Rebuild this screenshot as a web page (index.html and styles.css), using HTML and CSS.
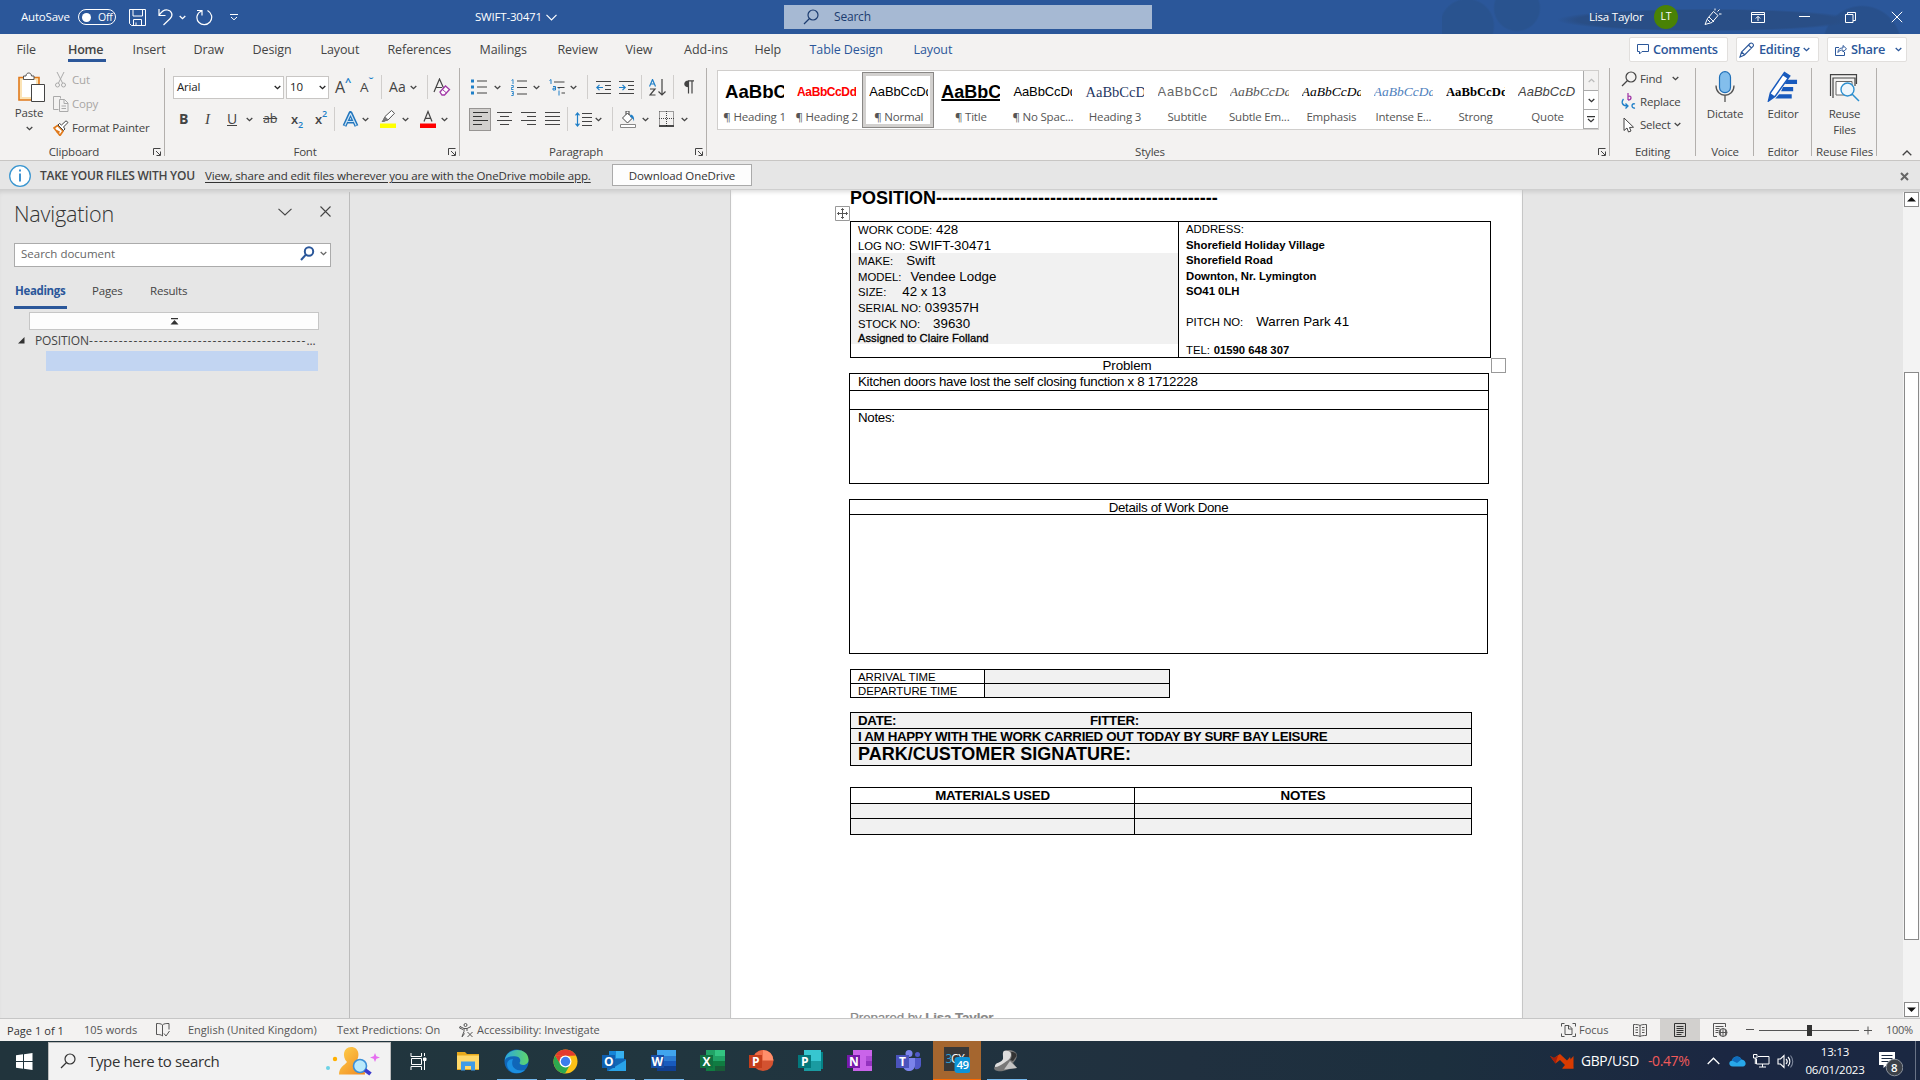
FILE: index.html
```html
<!DOCTYPE html>
<html lang="en">
<head>
<meta charset="utf-8">
<title>SWIFT-30471 - Word</title>
<link rel="stylesheet" href="styles.css">
</head>
<body>
<svg class="defs" width="0" height="0">
  <symbol id="chev" viewBox="0 0 7 5"><path d="M.7 1 3.5 3.7 6.300 1" fill="none" stroke="currentColor" stroke-width="1.300"/></symbol>
  <symbol id="launch" viewBox="0 0 8 8"><path d="M.5 7V.5H7.500M3 3l4 4M7.500 3.500v4h-4" fill="none" stroke="#444" stroke-width="1"/></symbol>
  <symbol id="lens" viewBox="0 0 16 16"><circle cx="10" cy="6" r="5" fill="none" stroke="currentColor" stroke-width="1.200"/><path d="M6.500 9.500 1 15" stroke="currentColor" stroke-width="1.300"/></symbol>
</svg>

<header class="titlebar">
  <span class="autosave">AutoSave</span>
  <span class="toggle"><i></i>Off</span>
  <svg width="17" height="17" viewBox="0 0 17 17" fill="none" stroke="#fff"><path d="M.5.5h16v16h-14l-2-2zM4 .5v6.500h9.500V.500M4.500 16.500v-6h8v6M7 13.500v3"/></svg>
  <svg width="16" height="18" viewBox="0 0 16 18" fill="none" stroke="#fff" stroke-width="1.200"><path d="M1 1v6.500h6.500M1.300 7C4 3 7 1.500 9.500 2c4.500.8 6 5.500 2.500 8.800L5.500 17"/></svg>
  <svg class="c w" width="7" height="5"><use href="#chev"/></svg>
  <svg width="17" height="17" viewBox="0 0 17 17" fill="none" stroke="#fff" stroke-width="1.200"><path d="M1 1.500h5v5M5.500 2C.5 4-.5 10 3 13.500c3 3 8 2.800 11-.5 3-4 2-9-2.500-11.500"/></svg>
  <svg width="8" height="7" viewBox="0 0 8 7" fill="none" stroke="#fff"><path d="M0 .5h8M1 3l3 2.800L7 3"/></svg>
  <span>SWIFT-30471</span>
  <svg class="w" width="11" height="7" viewBox="0 0 11 7" fill="none" stroke="#fff" stroke-width="1.200"><path d="m.5.8 5 5 5-5"/></svg>
  <div class="tsearch"><svg width="16" height="16"><use href="#lens"/></svg><span>Search</span></div>
  <div class="art"></div>
  <span class="user">Lisa Taylor</span>
  <span class="avatar">LT</span>
  <svg width="18" height="18" viewBox="0 0 18 18" fill="none" stroke="#fff"><path d="m1 16.500 2.500-6 6-7 4.500 4-6 7zM5 9l5 5M3.500 11.500 6 14M11 2.500V.5M13.500 3.500l2-2M15 6h2.500"/></svg>
  <svg width="14" height="11" viewBox="0 0 14 11" fill="none" stroke="#fff"><path d="M.5.5h13v10H.5zM.5 2.500h13M7 9V4.500M4.800 6.500 7 4.300l2.200 2.200"/></svg>
  <svg width="11" height="11" viewBox="0 0 11 11" stroke="#fff"><path d="M0 4.500h11"/></svg>
  <svg width="11" height="11" viewBox="0 0 11 11" fill="none" stroke="#fff"><path d="M.5 2.500h7.500v8H.500zM2.500 2.500V.500h8v8H8"/></svg>
  <svg width="12" height="12" viewBox="0 0 12 12" stroke="#fff"><path d="m.8.8 10.400 10.400M11.200.8.8 11.200"/></svg>
</header>

<nav class="tabs">
  <span>File</span><span class="on">Home</span><span>Insert</span><span>Draw</span><span>Design</span><span>Layout</span><span>References</span><span>Mailings</span><span>Review</span><span>View</span><span class="addins">Add-ins</span><span>Help</span><span class="ctx">Table Design</span><span class="ctx">Layout</span>
  <div class="tbtn b1"><svg width="12" height="11" viewBox="0 0 12 11" fill="none" stroke="#2b579a"><path d="M.5.5h11v7H5l-2.500 2.500V7.500h-2z"/></svg>Comments</div>
  <div class="tbtn b2"><svg width="16" height="16" viewBox="0 0 16 16" fill="none" stroke="#2b579a" stroke-width="1.100"><path d="m1 15 1.500-5L11 1.500c1.500-1.500 4.500 1 3 3L5.500 13zM9.500 3l3 3M2.500 10 6 13"/></svg>Editing<svg class="c" width="7" height="5"><use href="#chev"/></svg></div>
  <div class="tbtn b3"><svg width="12" height="12" viewBox="0 0 12 12" fill="none" stroke="#2b579a"><path d="M4 3.500H.5v8h9V8M3 8.500C3 5 5 4 8 4V1.500l3.500 3.300L8 8V6C6 6 4 6.500 3 8.500z"/></svg>Share<svg class="c" width="7" height="5"><use href="#chev"/></svg></div>
</nav>

<section class="ribbon">
  <div class="group clip">
    <div class="clipbody">
      <div class="paste">
        <svg width="28" height="31" viewBox="0 0 28 31" fill="none"><path d="M1 5.500h20V28H1z" fill="#fbe3b5" stroke="#e07a1c" stroke-width="1.600"/><path d="M4 8h14v17H4z" fill="#fff"/><path d="M5.500 7.500V4H8c0-4 5.500-4 5.500 0H16v3.500z" fill="#fff" stroke="#555"/><path d="M13.500 12.500h13v17h-13z" fill="#fff" stroke="#444"/></svg>
        <span>Paste</span><svg class="c" width="7" height="5"><use href="#chev"/></svg>
      </div>
      <div class="cliplist">
        <div class="dim"><svg width="16" height="16" viewBox="0 0 16 16" fill="none" stroke="#aaa"><path d="m4 0 5.500 11M11 0 5.500 11"/><circle cx="4.500" cy="13" r="2"/><circle cx="10.500" cy="13" r="2"/></svg>Cut</div>
        <div class="dim"><svg width="16" height="16" viewBox="0 0 16 16" fill="none" stroke="#aaa"><path d="M5.500 13.500h-5V.5h7v2M6.500 3.500h5l3.500 3.500v8.500H6.500zM11 3.500V7.500h4M8.500 10h4.500M8.500 12.500h4.500"/></svg>Copy</div>
        <div><svg width="16" height="16" viewBox="0 0 16 16" fill="none"><path d="m1 8 3.500-2.500L10 11l-3 4.500z" fill="#fff" stroke="#e07a1c" stroke-width="1.700"/><path d="m3.500 11 3 1.500" stroke="#e07a1c" stroke-width="2"/><path d="m5 5 5.500 5.500L12 9l-1.500-2L15 2.500 13 .8 8.500 5 6.500 3.500z" fill="#fff" stroke="#444"/></svg>Format Painter</div>
      </div>
    </div>
    <footer><span>Clipboard</span><svg width="8" height="8"><use href="#launch"/></svg></footer>
  </div>

  <div class="group font">
    <div class="row f1">
      <div class="combo k1">Arial<svg class="c" width="7" height="5"><use href="#chev"/></svg></div>
      <div class="combo k2">10<svg class="c" width="7" height="5"><use href="#chev"/></svg></div>
      <span class="grow">A<sup>^</sup></span><span class="shrink">A<sup>ˇ</sup></span><i class="sep"></i>
      <span class="aa">Aa<svg class="c" width="7" height="5"><use href="#chev"/></svg></span><i class="sep"></i>
      <svg width="18" height="18" viewBox="0 0 18 18" fill="none"><path d="M1 14 6.500 1 11 11M3 9.500h6" stroke="#444" stroke-width="1.200"/><path d="m7 14 5.500-6 4 3.500-5 5.500H9z" fill="#fff" stroke="#a23aa8" stroke-width="1.300"/><path d="m9.500 11.500 4 3.500" stroke="#a23aa8"/></svg>
    </div>
    <div class="row f2">
      <b>B</b><em>I</em><u>U</u><svg class="c" width="7" height="5"><use href="#chev"/></svg><s>ab</s>
      <span class="sc">x<sub>2</sub></span><span class="sc">x<sup>2</sup></span><i class="sep"></i>
      <svg width="17" height="17" viewBox="0 0 17 17" fill="none" stroke-linejoin="round"><path d="M2.500 15 8.500 2l6 13M5 10.500h7" stroke="#2276bd" stroke-width="4"/><path d="M2.800 14.500 8.500 2.500l5.700 12M5.500 10.500h6" stroke="#cfe6f7" stroke-width="1.200"/></svg><svg class="c" width="7" height="5"><use href="#chev"/></svg>
      <svg width="17" height="18" viewBox="0 0 17 18" fill="none"><path d="M0 13.500h16V18H0z" fill="#ff0"/><path d="m3 11 2-4.500 6.500-6 3 2.800L8 10z" fill="#fff" stroke="#555"/><path d="m5 6.500 3.500 3.300L4 12H1.500z" fill="#777"/></svg><svg class="c" width="7" height="5"><use href="#chev"/></svg>
      <svg width="16" height="18" viewBox="0 0 16 18" fill="none"><path d="M0 13.500h16V18H0z" fill="red"/><path d="M4 11.500 8 1.500l4 10M5.300 8.300h5.400" stroke="#444" stroke-width="1.200"/></svg><svg class="c" width="7" height="5"><use href="#chev"/></svg>
    </div>
    <footer><span>Font</span><svg width="8" height="8"><use href="#launch"/></svg></footer>
  </div>

  <div class="group para">
    <div class="row p1">
      <svg width="16" height="16" viewBox="0 0 16 16"><path d="M0 .5h3v3H0zM0 6.500h3v3H0zM0 12.500h3v3H0z" fill="#1e7fc8"/><path d="M6 2h10M6 8h10M6 14h10" stroke="#444" stroke-width="1.100"/></svg><svg class="c" width="7" height="5"><use href="#chev"/></svg>
      <svg width="16" height="17" viewBox="0 0 16 17"><path d="M.5 1.500 2 .5V5M.3 6.500h2V8.500h-2v2h2.200M.3 12.500h2v4h-2M1 14.500h1.300" stroke="#1e7fc8" fill="none" stroke-width=".9"/><path d="M6 2h10M6 8.500h10M6 15h10" stroke="#444" stroke-width="1.100"/></svg><svg class="c" width="7" height="5"><use href="#chev"/></svg>
      <svg width="16" height="17" viewBox="0 0 16 17"><path d="M.5 1.500 2 .5V5M4 7.500h2.500V11H4V9.200h2.500M10 11.500v5M10 9v1.200" stroke="#1e7fc8" fill="none"/><path d="M5 3h10.500M8.500 8.500h7M12.500 14h3.500" stroke="#444" stroke-width="1.100"/></svg><svg class="c" width="7" height="5"><use href="#chev"/></svg>
      <i class="sep"></i>
      <svg width="15" height="13" viewBox="0 0 15 13" fill="none"><path d="M0 .5h15M9 4.500h6M9 8.500h6M0 12.500h15" stroke="#444"/><path d="M7 6.500H.8M3.500 3.800.8 6.500l2.700 2.700" stroke="#1e7fc8" stroke-width="1.200"/></svg>
      <svg width="15" height="13" viewBox="0 0 15 13" fill="none"><path d="M0 .5h15M9 4.500h6M9 8.500h6M0 12.500h15" stroke="#444"/><path d="M0 6.500h6.200M3.500 3.800l2.700 2.700-2.700 2.700" stroke="#1e7fc8" stroke-width="1.200"/></svg>
      <i class="sep"></i>
      <svg width="17" height="17" viewBox="0 0 17 17" fill="none"><path d="M.5 7.500 3.500.5l3 7M1.500 5h4" stroke="#1e7fc8" stroke-width="1.200"/><path d="M1 10h5L1 16h5.500M13 0v16M9.500 12.500l3.500 3.500 3.500-3.500" stroke="#444" stroke-width="1.200"/></svg>
      <i class="sep"></i>
      <svg width="10" height="14" viewBox="0 0 10 14"><path d="M4.500 1v12.500M8 1v12.500M10 .8H4" stroke="#444" stroke-width="1.200"/><path d="M4.500.5v6.800C-1.200 7.300-1.200.5 4.500.5z" fill="#444"/></svg>
    </div>
    <div class="row p2">
      <span class="sel"><svg width="15" height="14" viewBox="0 0 15 14" stroke="#333"><path d="M0 .5h15M0 4.500h9M0 8.500h15M0 12.500h9"/></svg></span>
      <svg width="15" height="14" viewBox="0 0 15 14" stroke="#444"><path d="M0 .5h15M3 4.500h9M0 8.500h15M3 12.500h9"/></svg>
      <svg width="15" height="14" viewBox="0 0 15 14" stroke="#444"><path d="M0 .5h15M6 4.500h9M0 8.500h15M6 12.500h9"/></svg>
      <svg width="15" height="14" viewBox="0 0 15 14" stroke="#444"><path d="M0 .5h15M0 4.500h15M0 8.500h15M0 12.500h15"/></svg>
      <i class="sep"></i>
      <svg width="17" height="15" viewBox="0 0 17 15" fill="none"><path d="M7 1.500h10M7 5.500h10M7 9.500h10M7 13.500h10" stroke="#444"/><path d="M2.500 1v13M.5 3.300 2.500 1l2 2.300M.5 11.700l2 2.300 2-2.300" stroke="#1e7fc8" stroke-width="1.200"/></svg><svg class="c" width="7" height="5"><use href="#chev"/></svg>
      <i class="sep"></i>
      <svg width="16" height="17" viewBox="0 0 16 17" fill="none"><path d="M.5 13.500h15v3H.5z" fill="#fff" stroke="#888"/><path d="m2.500 7 5-5 5 5-5 5zM6 3.500V0h3v4" fill="#fff" stroke="#444"/><path d="M10.500 3.500c3 .5 4 3 3.500 7-1-3-2-4-4-4.500z" fill="#1e7fc8"/></svg><svg class="c" width="7" height="5"><use href="#chev"/></svg>
      <svg width="15" height="16" viewBox="0 0 15 16" fill="none"><path d="M.5.5h14v14M.5.500v14M7.500 0v15M0 7.500h15" stroke="#444" stroke-dasharray="1 1"/><path d="M0 15h15" stroke="#111" stroke-width="1.500"/></svg><svg class="c" width="7" height="5"><use href="#chev"/></svg>
    </div>
    <footer><span>Paragraph</span><svg width="8" height="8"><use href="#launch"/></svg></footer>
  </div>

  <div class="group styles">
    <div class="gallery">
      <div class="st"><p class="s1">AaBbC</p><span>¶ Heading 1</span></div>
      <div class="st"><p class="s2">AaBbCcDd</p><span>¶ Heading 2</span></div>
      <div class="st cur"><p class="s3">AaBbCcDd</p><span>¶ Normal</span></div>
      <div class="st"><p class="s4">AaBbC</p><span>¶ Title</span></div>
      <div class="st"><p class="s3">AaBbCcDd</p><span>¶ No Spac...</span></div>
      <div class="st"><p class="s6">AaBbCcD</p><span>Heading 3</span></div>
      <div class="st"><p class="s7">AaBbCcD</p><span>Subtitle</span></div>
      <div class="st"><p class="s8">AaBbCcDd</p><span>Subtle Em...</span></div>
      <div class="st"><p class="s9">AaBbCcDd</p><span>Emphasis</span></div>
      <div class="st"><p class="s10">AaBbCcDd</p><span>Intense E...</span></div>
      <div class="st"><p class="s11">AaBbCcDd</p><span>Strong</span></div>
      <div class="st"><p class="s12">AaBbCcD</p><span>Quote</span></div>
      <div class="scr"><i class="off"><svg class="flip" width="7" height="5"><use href="#chev"/></svg></i><i><svg width="7" height="5"><use href="#chev"/></svg></i><i><svg width="8" height="7" viewBox="0 0 8 7" fill="none" stroke="#333" stroke-width="1.200"><path d="M0 .6h8M1 3l3 2.800L7 3"/></svg></i></div>
    </div>
    <footer><span>Styles</span><svg width="8" height="8"><use href="#launch"/></svg></footer>
  </div>

  <div class="group edit">
    <div class="editlist">
      <div><svg width="16" height="16"><use href="#lens"/></svg>Find<svg class="c wide" width="7" height="5"><use href="#chev"/></svg></div>
      <div><svg width="16" height="17" viewBox="0 0 16 17" fill="none"><path d="M7 0v7M7 3.500c4-1.500 4 3.500 0 3.500" stroke="#a23aa8" stroke-width="1.300"/><path d="M14 11c-4-1.500-4 5 0 4M2.500 6C0 9 1 13 6.500 13M4.500 10.500 7 13l-2.500 2.500" stroke="#1e7fc8" stroke-width="1.300"/></svg>Replace</div>
      <div><svg width="16" height="16" viewBox="0 0 16 16" fill="#fff" stroke="#444"><path d="M3 1v12.500l3-2.500 1.500 4 2.500-1-1.500-3.500 4-.3z"/></svg>Select<svg class="c" width="7" height="5"><use href="#chev"/></svg></div>
    </div>
    <footer><span>Editing</span></footer>
  </div>
  <div class="group big g1">
    <svg width="20" height="31" viewBox="0 0 20 31" fill="none"><rect x="4.500" y=".7" width="11" height="21" rx="5.500" fill="#83beec" stroke="#1e6fb8" stroke-width="1.200"/><path d="M1 14.500c0 13 18 13 18 0M10 24.500V31" stroke="#555" stroke-width="1.300"/></svg>
    <span>Dictate</span><footer><span>Voice</span></footer>
  </div>
  <div class="group big g2">
    <svg width="32" height="32" viewBox="0 0 32 32"><path d="M20 9h10.500v4.500H18zM16 16.500h10.500v4.500H14zM12 24h13v4.500H8z" fill="#185abd"/><path d="m1 31 2-8.500L17.500 1.500 23 5 8 26z" fill="#fff" stroke="#185abd" stroke-width="1.500"/><path d="m1 31 2-8 4.500 3zM17.500 1.500 23 5l-2 3-5.500-3.500z" fill="#185abd"/></svg>
    <span>Editor</span><footer><span>Editor</span></footer>
  </div>
  <div class="group big g3">
    <svg width="32" height="28" viewBox="0 0 32 28" fill="none"><path d="M1.500 22V.7h26V10M4 24V4h22v8" stroke="#444" stroke-width="1.200"/><path d="M7 7.500h16V21H7z" fill="#fff" stroke="#666"/><circle cx="18.500" cy="15.500" r="6.500" fill="#eef6fc" stroke="#2b8fd0" stroke-width="1.400"/><path d="m23 20 7 7" stroke="#2b8fd0" stroke-width="1.500"/></svg>
    <span>Reuse<br>Files</span><footer><span>Reuse Files</span></footer>
  </div>
  <div class="collapse"><svg width="10" height="6" viewBox="0 0 10 6" fill="none" stroke="#444" stroke-width="1.300"><path d="m.7 5.300 4.300-4.300 4.300 4.300"/></svg></div>
</section>

<div class="msgbar">
  <svg width="22" height="22" viewBox="0 0 22 22" fill="none"><circle cx="11" cy="11" r="10.300" fill="#fff" stroke="#3a96d0" stroke-width="1.300"/><path d="M11 8.500v8M11 4.500v2" stroke="#1e7fc8" stroke-width="1.700"/></svg>
  <strong>TAKE YOUR FILES WITH YOU</strong><a>View, share and edit files wherever you are with the OneDrive mobile app.</a>
  <span class="dl">Download OneDrive</span>
  <svg width="9" height="9" viewBox="0 0 9 9" stroke="#666" stroke-width="2"><path d="m1 1 7 7M8 1 1 8"/></svg>
</div>

<main class="work">
  <aside class="nav">
    <div class="navhead"><span>Navigation</span><svg width="14" height="8" viewBox="0 0 14 8" fill="none" stroke="#444" stroke-width="1.100"><path d="m.5.8 6.500 6.200L13.500.8"/></svg><svg width="11" height="11" viewBox="0 0 11 11" stroke="#444" stroke-width="1.100"><path d="m.5.5 10 10M10.500.5l-10 10"/></svg></div>
    <div class="navsearch"><span>Search document</span><svg width="15" height="15" viewBox="0 0 15 15" fill="none" stroke="#2b579a" stroke-width="2"><circle cx="9" cy="5.500" r="4.200"/><path d="m6 8.500-5 5.500"/></svg><svg width="7" height="5"><use href="#chev"/></svg></div>
    <div class="navtabs"><span class="on">Headings</span><span>Pages</span><span>Results</span></div>
    <div class="totop"><svg width="9" height="7" viewBox="0 0 9 7"><path d="M1 0h7v1.200H1zM4.500 2 8.500 6.500h-8z" fill="#333"/></svg></div>
    <div class="headrow"><svg width="7" height="7" viewBox="0 0 7 7"><path d="M6.500 0v6.500H0z" fill="#333"/></svg><span>POSITION<span class="dashes">--------------------------------------------</span>...</span></div>
    <div class="current"></div>
  </aside>

  <div class="canvas">
    <article class="page">
      <h1>POSITION-----------------------------------------------</h1>
      <div class="anchorbox"><svg width="15" height="15" viewBox="0 0 15 15" fill="none" stroke="#555"><path d="M.5.5h14v14H.5z" fill="#fff" stroke="#999"/><path d="M7.500 2.500v10M2.500 7.500h10M6 4l1.500-1.500L9 4M6 11l1.500 1.500L9 11M4 6 2.500 7.500 4 9M11 6l1.500 1.500L11 9"/></svg></div>
      <div class="info">
        <div class="left">
          <p><small>WORK CODE:</small> 428</p>
          <p><small>LOG NO:</small> SWIFT-30471</p>
          <div class="shade">
            <p><small>MAKE:</small><span class="v1">Swift</span></p>
            <p><small>MODEL:</small><span class="v2">Vendee Lodge</span></p>
            <p><small>SIZE:</small><span class="v3">42 x 13</span></p>
            <p><small>SERIAL NO:</small> 039357H</p>
            <p><small>STOCK NO:</small><span class="v4">39630</span></p>
            <p class="assigned">Assigned to Claire Folland</p>
          </div>
        </div>
        <div class="right">
          <p><small>ADDRESS:</small></p>
          <p><b>Shorefield Holiday Village</b></p>
          <p><b>Shorefield Road</b></p>
          <p><b>Downton, Nr. Lymington</b></p>
          <p><b>SO41 0LH</b></p>
          <p>&nbsp;</p>
          <p><small>PITCH NO:</small><span class="v4">Warren Park 41</span></p>
          <p class="tel"><small>TEL:</small> <b>01590 648 307</b></p>
        </div>
        <i class="handle"></i>
      </div>
      <div class="problem">Problem</div>
      <div class="box problems"><p>Kitchen doors have lost the self closing function x 8 1712228</p><p></p><p>Notes:</p></div>
      <div class="box details"><p>Details of Work Done</p><p></p></div>
      <div class="grid2 times"><span>ARRIVAL TIME</span><i></i><span>DEPARTURE TIME</span><i></i></div>
      <div class="box sign"><p><span>DATE:</span><span>FITTER:</span></p><p>I AM HAPPY WITH THE WORK CARRIED OUT TODAY BY SURF BAY LEISURE</p><p>PARK/CUSTOMER SIGNATURE:</p></div>
      <div class="grid2 mats"><b>MATERIALS USED</b><b>NOTES</b><i></i><i></i><i></i><i></i></div>
      <div class="prep">Prepared by <b>Lisa Taylor</b></div>
    </article>
    <div class="vscroll"><i class="arrow"><svg width="9" height="5" viewBox="0 0 9 5"><path d="M4.500 0 9 4.500H0z" fill="#111"/></svg></i><i class="thumb"></i><i class="arrow"><svg width="9" height="5" viewBox="0 0 9 5"><path d="M4.500 5 9 .5H0z" fill="#111"/></svg></i></div>
  </div>
</main>

<div class="status">
  <span class="pg">Page 1 of 1</span><span>105 words</span>
  <svg width="14" height="14" viewBox="0 0 14 14" fill="none" stroke="#555"><path d="M6.500 13V2C5 .5 3 .5.500.5v11c2.500 0 4.500 0 6 1.500M6.500 2C8 .5 10 .5 13 .5v6M8 10.500l2 2.500 3.500-5"/></svg>
  <span>English (United Kingdom)</span><span class="pred">Text Predictions: On</span>
  <svg width="15" height="15" viewBox="0 0 15 15" fill="none" stroke="#555"><circle cx="6.500" cy="2" r="1.500"/><path d="M1 3.500 5 5.500v3L3 13.500M12 3.500 8 5.500V8M5 5.500h3M1.500 3 .5 5 4 6.500M3 14l2.500-3.500M8.500 9l5 5M13.500 9l-5 5"/></svg>
  <span class="acc">Accessibility: Investigate</span>
  <svg width="15" height="14" viewBox="0 0 15 14" fill="none" stroke="#555"><path d="M.5 3.500v-3h3M11.500.5h3v3M.5 10.500v3h3M11.500 13.500h3v-3M4 2.500h4l3 3v6H4zM7.500 2.500V6H11"/></svg>
  <span>Focus</span>
  <svg width="14" height="13" viewBox="0 0 14 13" fill="none" stroke="#555"><path d="M7 12.500V1.500C5.500.5 3 .5.5.5v11c2.500 0 5 0 6.500 1 1.500-1 4-1 6.500-1V.5C11 .5 8.500.5 7 1.500M2.500 3.500H5M2.500 6H5M2.500 8.500H5M9 3.500h2.500M9 6h2.500M9 8.500h2.500"/></svg>
  <div class="view"><svg width="12" height="14" viewBox="0 0 12 14" fill="none" stroke="#333"><path d="M.5.5h11v13H.5zM2.500 3.500h7M2.500 5.500h7M2.500 7.500h7M2.500 9.500h7M2.500 11.500h5"/></svg></div>
  <svg width="15" height="14" viewBox="0 0 15 14" fill="none" stroke="#555"><path d="M4 13.500H.5V.5h12V4M2.500 3.500h8M2.500 5.500h4M2.500 7.500h3M2.500 9.500H5"/><circle cx="10" cy="9.500" r="4"/><path d="M6 9.500h8M10 5.500v8M8 6.500c-1 2-1 4 0 6M12 6.500c1 2 1 4 0 6"/></svg>
  <svg width="8" height="8" viewBox="0 0 8 8" stroke="#555"><path d="M0 3.500h8"/></svg>
  <div class="zoomline"><i></i></div>
  <svg width="8" height="9" viewBox="0 0 8 9" stroke="#555"><path d="M0 4.500h8M4 .5v8"/></svg>
  <span class="pct">100%</span>
</div>

<div class="taskbar">
  <svg class="win" width="17" height="17" viewBox="0 0 17 17" fill="#fff"><path d="M0 2.300 7 1.300V8H0zM8 1.200 16.500 0v8H8zM0 9h7v6.700l-7-1zM8 9h8.500v8L8 15.800z"/></svg>
  <div class="find"><svg width="16" height="16"><use href="#lens"/></svg><span>Type here to search</span>
    <svg width="56" height="30" viewBox="0 0 56 30"><defs><linearGradient id="gold" x1="0" x2="1" y1="0" y2="1"><stop offset="0" stop-color="#ffd24d"/><stop offset="1" stop-color="#f0861f"/></linearGradient></defs><circle cx="3" cy="22" r="2" fill="#6cd3e6"/><circle cx="10" cy="13" r="2.200" fill="#ffb000"/><path d="M26 1c9 0 9 11 4.500 15 3 2.500 9.500 4 9.500 12.500H14C14 21 20 19 22 16 17 11 18 1 26 1z" fill="url(#gold)"/><circle cx="35" cy="20" r="6.500" fill="#b9e9fb" stroke="#3b8fd8" stroke-width="1.600"/><path d="m40 24 5.500 4" stroke="#3d3acc" stroke-width="4"/><path d="m50 7 1.300 3.200L55 11.500l-3.700 1.300L50 16l-1.300-3.200L45 11.500l3.700-1.300z" fill="#e66df0"/></svg>
  </div>
  <div class="apps">
    <div><svg width="17" height="17" viewBox="0 0 17 17" fill="none" stroke="#fff"><path d="M1 3.500h10.500M1 3.500V0M11.500 3.500V0M1.500 5.500h10v6h-10zM1 17v-3.500h10.500V17M14.500 0v3M14.500 8v9"/><path d="M13.500 5h2.500v2.500h-2.500z" fill="#fff"/></svg></div>
    <div><svg width="24" height="20" viewBox="0 0 24 20"><path d="M1 1h8l2 2h12v16H1z" fill="#e8a91c"/><path d="M1 4.500h22V18H1z" fill="#ffd869"/><path d="M5 19.500v-9h14v9h-4V15H9v4.500z" fill="#3f9be6"/></svg></div>
    <div class="run"><svg width="25" height="25" viewBox="0 0 25 25"><defs><linearGradient id="edge" x1="0" x2="1"><stop offset="0" stop-color="#2ba6e0"/><stop offset="1" stop-color="#5fd66a"/></linearGradient></defs><circle cx="12.500" cy="12.500" r="12" fill="#1066b8"/><path d="M.6 12C2-3 25-2 24.500 11c0 6-8.500 6-9 3 1.500-2 1-6-3-6.500C7 6.500 2 8 .6 12z" fill="url(#edge)"/><path d="M9 10c-3 7 2 13 12 11-6 6-18 3-18-6 0-3 3-5 6-5z" fill="#1b8fe0"/></svg></div>
    <div class="run"><svg width="25" height="25" viewBox="0 0 25 25"><circle cx="12.500" cy="12.500" r="12" fill="#fbc116"/><path d="M2.100 6.500A12 12 0 0 1 22.900 6.500L12.500 7z" fill="#e33b2e"/><path d="M2.100 6.500A12 12 0 0 0 12 24.500L17.500 15 12 18 7.500 15z" fill="#2da94f"/><path d="M2.100 6.500 7.500 15.500 9 7h14z" fill="#e33b2e"/><circle cx="12.500" cy="12.500" r="6" fill="#fff"/><circle cx="12.500" cy="12.500" r="4.700" fill="#3b7ded"/></svg></div>
    <div class="run"><svg width="25" height="22" viewBox="0 0 25 22"><path d="M7 1h15v12H7z" fill="#1685d8"/><path d="M14 1h8v7h-8z" fill="#37b1f0"/><path d="M5 9h19v12H5z" fill="#1066b5"/><path d="m6 21 18-11v11z" fill="#29a3e8"/><path d="M0 5h13v13H0z" fill="#0f5fb0"/><text x="2" y="15.500" class="logo">O</text></svg></div>
    <div class="run two"><svg width="25" height="22" viewBox="0 0 25 22"><path d="M6 0h19v6H6z" fill="#41a5ee"/><path d="M6 6h19v5H6z" fill="#2b7cd3"/><path d="M6 11h19v5H6z" fill="#185abd"/><path d="M6 16h19v5H6z" fill="#103f91"/><path d="M0 5h13v13H0z" fill="#174ea6"/><text x="0.500" y="15.500" class="logo">W</text></svg></div>
    <div><svg width="25" height="22" viewBox="0 0 25 22"><path d="M6 0h19v21H6z" fill="#21a366"/><path d="M15 0h10v6H15z" fill="#33c481"/><path d="M6 11h19v10H6z" fill="#107c41"/><path d="M15 16h10v5H15z" fill="#185c37"/><path d="M0 5h13v13H0z" fill="#107040"/><text x="2.500" y="15.500" class="logo">X</text></svg></div>
    <div><svg width="25" height="22" viewBox="0 0 25 22"><circle cx="14" cy="10.500" r="10.500" fill="#d35230"/><path d="M14 0a10.500 10.500 0 0 1 10.500 10.500H14z" fill="#ff8f6b"/><path d="M14 0v10.500H4A10.500 10.500 0 0 1 14 0z" fill="#ed6c47"/><path d="M0 5h13v13H0z" fill="#c43e1c"/><text x="3" y="15.500" class="logo">P</text></svg></div>
    <div><svg width="25" height="22" viewBox="0 0 25 22"><path d="M20 2h5v17h-5z" fill="#038387"/><path d="M6 0h17v11H6z" fill="#37c6d0"/><path d="M6 11h17v10H6z" fill="#1a9ba1"/><path d="M0 5h13v13H0z" fill="#03787c"/><text x="3" y="15.500" class="logo">P</text></svg></div>
    <div><svg width="25" height="22" viewBox="0 0 25 22"><path d="M6 0h19v21H6z" fill="#ca64ea"/><path d="M19 6h6v5h-6z" fill="#ae4bd5"/><path d="M19 11h6v5h-6z" fill="#9332bf"/><path d="M0 5h13v13H0z" fill="#7719aa"/><text x="2" y="15.500" class="logo">N</text></svg></div>
    <div><svg width="25" height="22" viewBox="0 0 25 22"><circle cx="13" cy="3.500" r="3.500" fill="#7b83eb"/><circle cx="21.500" cy="4.500" r="2.500" fill="#5059c9"/><path d="M17 8h8v7c0 3-3 5-6 4z" fill="#5059c9"/><path d="M7 8h12v7c0 8-12 8-12 0z" fill="#7b83eb"/><path d="M0 5h13v13H0z" fill="#4b53bc"/><text x="3" y="15.500" class="logo">T</text></svg></div>
    <div class="cx"><svg width="26" height="26" viewBox="0 0 26 26"><path d="M0 0h25v24H0z" fill="#383838"/><text x="1.500" y="16" class="cxt" fill="#2a9fd8">3</text><text x="7" y="16" class="cxt" fill="#fff">CX</text><rect x="10.500" y="10" width="16" height="16" rx="3" fill="#0d93d6"/><text x="12.500" y="22" class="cxn">49</text></svg></div>
    <div class="run"><svg width="25" height="22" viewBox="0 0 25 22"><path d="M10 1c4-2 12-1 13 4 0 3-2 6-4 8l4 5-7 1-7 2c-6 1-11-1-8-5 2-3 7-3 8-7 .5-3-1-6 1-8z" fill="#777"/><path d="M10 1c3-1 7 0 7 3 0 5-3 6-7 9-3 2-6 4-9 4-1-5 7-4 8-8 .5-3-1-6 1-8z" fill="#ddd"/><path d="m16 11 7 7-13 1.500z" fill="#c4c4c4"/><path d="M17 2c4 0 6 2 5.500 4L19 11l-3-1c2-2 2-6 1-8z" fill="#333"/></svg></div>
  </div>
  <svg width="24" height="15" viewBox="0 0 24 15"><path d="M0 2 4 4l6-4 7 6.500L20 3l3.500 11.500H12L15 11 10 6 5.500 9.500z" fill="#d83b01"/><path d="M0 2 4 4l4-2.500-2.500 8z" fill="#a51f0c"/><path d="M12.500 14.500 23.500 2v12.500z" fill="#d83b01"/></svg>
  <span class="fxp">GBP/USD</span><span class="fxn">-0.47%</span>
  <svg width="13" height="8" viewBox="0 0 13 8" fill="none" stroke="#fff" stroke-width="1.300"><path d="m.7 7 5.800-5.800L12.300 7"/></svg>
  <svg width="17" height="11" viewBox="0 0 17 11"><path d="M4 10.500C-1 10.500-.5 5 3 4.500 4-.5 11-1 12.500 3.500 18 4 17.500 10.500 14 10.500z" fill="#28a8ea"/><path d="M3 4.500C4-.5 11-1 12.500 3.500L8 7z" fill="#0f6cbd"/></svg>
  <svg width="17" height="14" viewBox="0 0 17 14" fill="none" stroke="#fff"><path d="M5 2.500h11v7.500H3.500V5M9.500 10v3M6 13h7M.5.500h3.500V4H.5zM2.300 4v6"/></svg>
  <svg width="17" height="15" viewBox="0 0 17 15" fill="none" stroke="#fff" stroke-width="1.100"><path d="M1 5h2.500L7 1.500v12L3.500 10H1zM9 5c1.500 1.500 1.500 3.500 0 5M11 3c2.500 2.500 2.500 6.500 0 9"/><path d="M13.500 1.500c3 3.500 3 8.500 0 12" stroke="#7d879b"/></svg>
  <div class="clock">13:13<br>06/01/2023</div>
  <div class="note"><svg width="24" height="25" viewBox="0 0 24 25"><path d="M0 0h16v13H8l-3.500 3V13H0z" fill="#fff"/><path d="M2.500 3.500h11M2.500 6.500h11M2.500 9.500h7" stroke="#1c2b42"/><circle cx="15.500" cy="15.500" r="8.300" fill="#3c4149" stroke="#8b929c"/><text x="12" y="20" class="cxn">8</text></svg></div>
  <i class="peek"></i>
</div>
</body>
</html>
```
FILE: styles.css
```css
* { box-sizing: border-box; }
body { margin: 0; width: 1920px; height: 1080px; overflow: hidden; background: #e6e6e6; color: #444; font: 11.5px/14px "Open Sans", "Noto Sans", sans-serif; letter-spacing: -.2px; white-space: nowrap; display: flex; flex-direction: column; }
svg { display: block; flex: none; }
.defs { position: absolute; }
p, h1 { margin: 0; }
i { font-style: normal; }

/* title bar */
.titlebar { height: 34px; background: #2b579a; color: #fff; display: grid; align-items: center; padding-left: 21px;
  grid-template-columns: 57px 51px 29px 21px 17px 34px 245px 71px 238px 368px 437px 65px 50px 47px 48px 46px 46px 20px; }
.toggle { width: 38px; height: 16px; border: 1px solid #fff; border-radius: 8px; display: flex; align-items: center; gap: 7px; padding-left: 3px; font-size: 10.5px; line-height: 12px; }
.toggle i { width: 9px; height: 9px; border-radius: 50%; background: #fff; }
.tsearch { height: 24px; background: #a6b9d3; color: #1c3c70; display: flex; align-items: center; gap: 15px; padding-left: 19px; font-size: 12px; }
.art { height: 34px; align-self: stretch; margin-left: 290px; width: 477px; background: radial-gradient(circle at 25px 26px, #29538f 26px, transparent 28px), radial-gradient(circle at 75px 8px, #29538f 22px, transparent 24px), radial-gradient(ellipse at 265px 20px, #294e86 130px, transparent 150px), radial-gradient(circle at 420px 45px, #28508c 38px, transparent 40px); }
.user, .avatar { position: relative; }
.avatar { width: 24px; height: 24px; border-radius: 50%; background: #498205; text-align: center; line-height: 23px; font-size: 10.5px; }

/* tab strip */
.tabs { height: 31px; background: #f3f2f1; display: grid; padding-left: 17px; font-size: 12.5px; letter-spacing: -.1px; line-height: 31px;
  grid-template-columns: 51px 65px 61px 59px 68px 67px 92px 78px 68px 59px 70px 55px 104px 715px 107px 91px 80px; }
.tabs > span { margin-left: -.5px; }
.tabs .on { font-weight: 600; letter-spacing: -.2px; width: 38px; margin-left: 0; border-bottom: 3px solid #2b579a; height: 28px; }
.tabs .addins { letter-spacing: 0; margin-left: -1px; }
.ctx { color: #2b579a; }
.tbtn { height: 25px; margin-top: 3px; background: #fff; border: 1px solid #e1dfdd; border-radius: 2px; color: #2b579a; font-weight: 600; font-size: 12.8px; letter-spacing: -.3px; line-height: 23px; display: flex; align-items: center; }
.b1 { width: 99px; padding-left: 7px; gap: 4px; }
.b2 { width: 83px; padding-left: 2px; gap: 4px; }
.b3 { width: 80px; padding-left: 7px; gap: 4px; }
.b3 .c { margin-left: 6px; }

/* ribbon */
.ribbon { height: 96px; background: #f3f2f1; border-bottom: 1px solid #c8c6c4; display: grid; grid-template-columns: 165px 295px 247px 903px 86px 58px 58px 65px 43px; padding-top: 3px; }
.group { height: 88px; border-right: 1px solid #b3b0ad; display: flex; flex-direction: column; position: relative; min-width: 0; }
.group footer { margin-top: auto; display: flex; align-items: center; justify-content: center; line-height: 16px; margin-bottom: -4px; height: 16px; flex: none; position: relative; }
.group footer svg { position: absolute; right: 3px; top: 4px; }
.clip footer { padding-right: 16px; }
.font footer { padding-right: 14px; }
.para footer { padding-right: 14px; }
.styles footer { padding-right: 16px; }
.clipbody { display: flex; padding: 4px 0 0 14px; height: 72px; }
.paste { width: 30px; height: 66px; display: flex; flex-direction: column; align-items: center; }
.paste > svg:first-child { margin-left: 6px; }
.paste span { margin: 3px 0 6px; }
.cliplist { margin-left: 9px; display: flex; flex-direction: column; gap: 8px; }
.cliplist div { height: 16px; display: flex; align-items: center; gap: 3px; }
.dim { color: #a8a6a4; }
.row { display: grid; align-items: center; height: 24px; }
.sep { width: 1px; height: 24px; background: #d0cecc; }
.combo { height: 23px; border: 1px solid #c8c6c4; background: #fff; color: #222; display: flex; align-items: center; justify-content: space-between; padding: 0 2px 0 3px; }
.k1 { width: 111px; } .k2 { width: 43px; }
.f1 { margin: 7px 0 0 8px; grid-template-columns: 113px 49px 25px 21px 8px 38px 6px 24px; }
.grow, .shrink, .aa { display: flex; font-size: 16px; line-height: 20px; }
.grow sup, .shrink sup { color: #1e7fc8; font-size: 11px; line-height: 10px; font-weight: 700; }
.shrink { font-size: 13.5px; }
.aa { font-size: 14px; align-items: center; gap: 4px; letter-spacing: .2px; }
.f2 { margin: 8px 0 0 14px; grid-template-columns: 26px 22px 19px 17px 28px 24px 19px 8px 20px 18px 22px 18px 21px 12px; font-size: 14px; }
.f2 em { font-family: "Liberation Serif", serif; font-size: 15px; }
.f2 s { font-size: 12.5px; }
.sc { font-size: 13px; font-weight: 600; display: flex; align-items: center; }
.sc sub, .sc sup { color: #1e7fc8; font-size: 9px; line-height: 9px; }
.sc sub { margin-top: 11px; } .sc sup { margin-top: -11px; }
.p1 { margin: 7px 0 0 11px; grid-template-columns: 23px 17px 22px 16px 21px 17px 9px 23px 22px 8px 24px 11px 12px; }
.p2 { margin: 8px 0 0 9px; grid-template-columns: 28px 24px 24px 22px 8px 20px 17px 8px 22px 17px 22px 8px; }
.sel { width: 22px; height: 23px; background: #d2d0ce; border: 1px solid #979593; display: grid; place-content: center; }

/* style gallery */
.gallery { width: 882px; height: 60px; margin: 2px 0 0 10px; background: #fff; border: 1px solid #d0cecc; display: grid; grid-template-columns: repeat(12, 72.100px) 1fr; }
.st { height: 58px; padding: 9px 6px 0 7px; text-align: center; overflow: hidden; }
.st p { height: 24px; line-height: 24px; width: 59px; overflow: hidden; color: #000; text-align: left; font-family: "Liberation Sans", sans-serif; letter-spacing: 0; margin-bottom: 6px; }
.st span { display: block; margin: 0 -7px; color: #555; line-height: 14px; }
.cur { border: 1px solid #8a8886; height: 56px; margin-top: 1px; padding: 7px 5px 0 6px; box-shadow: inset 0 0 0 3px #d2d0ce; }
.st .s1 { font-weight: 700; font-size: 18.600px; }
.st .s2 { font-weight: 700; font-size: 12px; color: #f00; letter-spacing: -.4px; }
.st .s3 { font-size: 13px; letter-spacing: -.1px; }
.st .s4 { font-weight: 700; font-size: 18px; text-decoration: underline; text-decoration-thickness: 2px; }
.st .s6 { font: 14.500px/24px "Liberation Serif", serif; color: #1f3763; }
.st .s7 { font-size: 13px; color: #666; letter-spacing: .7px; }
.st .s8 { font: italic 13.500px/24px "Liberation Serif", serif; color: #555; }
.st .s9 { font: italic 13.500px/24px "Liberation Serif", serif; }
.st .s10 { font: italic 13.500px/24px "Liberation Serif", serif; color: #4f81bd; }
.st .s11 { font: 700 12.700px/24px "Liberation Serif", serif; }
.st .s12 { font-size: 13px; font-style: italic; color: #444; }
.scr { display: grid; grid-template-rows: 20px 19px 19px; color: #333; }
.scr i { border-left: 1px solid #aaa; border-bottom: 1px solid #aaa; display: grid; place-content: center; }
.scr .off { color: #bbb; background: #f3f2f1; }
.flip { transform: scaleY(-1); }
.editlist { padding: 2px 0 0 11px; display: flex; flex-direction: column; gap: 6px; }
.editlist div { height: 17px; display: flex; align-items: center; gap: 3px; }
.editlist .wide { margin-left: 7px; }
.big { align-items: center; padding-left: 1px; }
.big > svg { margin-top: 3px; height: 31px; }
.big > span { margin-top: 4px; line-height: 16px; text-align: center; }
.g3 > svg { margin-top: 6px; height: 28px; }
.collapse { padding: 82px 0 0 25px; }

/* message bar */
.msgbar { height: 29px; border-bottom: 1px solid #cfcfcf; background: #e6e6e6; display: grid; align-items: center; padding-left: 9px; grid-template-columns: 31px 165px 407px 1288px 12px; color: #333; padding-top: 2px; }
.msgbar strong { font-weight: 600; letter-spacing: -.25px; color: #444; font-size: 12px; }
.msgbar a { text-decoration: underline; text-underline-offset: 2px; letter-spacing: -.14px; }
.dl { width: 140px; height: 22px; margin-top: -3px; line-height: 21px; text-align: center; border: 1px solid #aaa; background: #fdfdfd; letter-spacing: -.1px; }

/* navigation pane */
.work { height: 828px; display: flex; box-shadow: inset 0 4px 4px -2px #ccc; overflow: hidden; }
.nav { width: 350px; height: 826px; margin-top: 2px; border-right: 1px solid #bcbcbc; padding-left: 14px; }
.navhead { display: grid; grid-template-columns: 264px 42px 12px; align-items: center; height: 36px; margin-top: 3px; }
.navhead span { font: 300 21.600px/30px "Open Sans", sans-serif; color: #333; padding-top: 2px; letter-spacing: -.2px; }
.navhead svg { margin-top: -3px; }
.navsearch { width: 317px; height: 24px; margin-top: 12px; border: 1px solid #ababab; background: #fff; padding: 0 3px 3px 6px; display: flex; align-items: center; gap: 5px; color: #666; }
.navsearch span { margin-right: auto; letter-spacing: 0; }
.navtabs { display: grid; grid-template-columns: 78px 58px 60px; margin-top: 14px; height: 28px; line-height: 20px; }
.navtabs .on { color: #2b579a; font-weight: 700; width: 53px; border-bottom: 3px solid #2b579a; padding-left: 1px; letter-spacing: -.35px; }
.totop { width: 290px; height: 18px; margin: 3px 0 0 15px; border: 1px solid #c6c6c6; background: #fdfdfd; display: grid; place-content: center; }
.headrow { display: flex; align-items: center; height: 20px; gap: 10px; padding-left: 4px; margin-top: 1px; }
.headrow svg { margin-top: -2px; }
.headrow > span { letter-spacing: -.1px; font-size: 12px; width: 284px; overflow: hidden; }
.dashes { letter-spacing: 1.080px; }
.current { width: 272px; height: 20px; background: #c2d5f2; margin: 0 0 0 32px; }

/* document */
.canvas { flex: 1; display: flex; justify-content: space-between; padding-left: 380px; }
.page { width: 793px; height: 828px; border: solid #c6c6c6; border-width: 0 1px; background: #fff; padding-left: 119px; color: #000; font: 13.330px/15.400px "Liberation Sans", sans-serif; letter-spacing: 0; box-shadow: inset 0 4px 4px -2px #ddd; }
.page small { font-size: 11.330px; }
h1 { font-size: 18px; line-height: 20px; height: 18px; margin-top: -2px; }
.anchorbox { height: 15px; margin-left: -15px; }
.info { width: 641px; height: 137px; border: 1px solid #000; display: grid; grid-template-columns: 328px 1fr; position: relative; }
.info .left { border-right: 1px solid #000; }
.info p { padding-left: 7px; height: 15.600px; }
.info .right p { height: 15.500px; }
.info .right { margin-top: -.8px; }
.shade { background: #f1f1f1; height: 91px; }
.info b { font-size: 11.330px; }
.info .assigned { font-size: 11.200px; -webkit-text-stroke: .3px #000; }
.v1 { margin-left: 13px; } .v2 { margin-left: 9px; } .v3 { margin-left: 16px; } .v4 { margin-left: 13px; }
.info .right .tel { margin-top: 12.500px; }
.handle { position: absolute; right: -16px; top: 136px; width: 15px; height: 15px; border: 1px solid #999; background: #fff; }
.problem { height: 15px; width: 554px; text-align: center; letter-spacing: -.1px; }
.box { border: 1px solid #000; }
.box p { padding-left: 8px; border-top: 1px solid #000; letter-spacing: -.300px; }
.box p:first-child { border-top: 0; }
.problems { width: 640px; margin-left: -1px; }
.problems p:nth-child(1) { height: 16px; } .problems p:nth-child(2) { height: 19px; } .problems p:nth-child(3) { height: 74px; }
.details { width: 639px; margin: 15px 0 0 -1px; }
.details p:first-child { height: 14px; text-align: center; padding: 0; }
.details p:last-child { height: 139px; }
.grid2 { display: grid; border: solid #000; border-width: 1px 0 0 1px; }
.grid2 > * { border: solid #000; border-width: 0 1px 1px 0; }
.grid2 > i { background: #f1f1f1; }
.times { width: 320px; margin-top: 15px; grid-template: 14px 14px / 134px 1fr; font-size: 11.400px; line-height: 15px; }
.times span { padding-left: 7px; }
.sign { width: 622px; margin-top: 14px; background: #f1f1f1; font-weight: 700; line-height: 15px; }
.sign p { padding-left: 7px; height: 16px; }
.sign p:first-child { height: 15px; display: grid; grid-template-columns: 232px 1fr; }
.sign p:nth-child(2) { letter-spacing: -.330px; height: 15px; }
.sign p:last-child { font-size: 18px; line-height: 21px; height: 22px; letter-spacing: 0; }
.mats { width: 622px; margin-top: 21px; grid-template: 16px 15px 16px / 284px 1fr; text-align: center; line-height: 15px; letter-spacing: -.2px; }
.prep { color: #888; margin-top: 175px; letter-spacing: -.1px; -webkit-text-stroke: .2px #888; }

.vscroll { width: 17px; background: #f3f3f3; margin-top: 2px; height: 825px; padding: 0 2px 0 1px; display: flex; flex-direction: column; }
.vscroll i { border: 1px solid #8a8a8a; background: #fff; width: 15px; flex: none; }
.arrow { height: 15px; display: grid; place-content: center; }
.thumb { height: 568px; margin: 165px 0 62px; }

/* status bar */
.status { height: 23px; background: #f3f2f1; border-top: 1px solid #c6c6c6; display: grid; align-items: center; padding-left: 7px; color: #555; font-size: 11px; letter-spacing: -.1px;
  grid-template-columns: 77px 72px 32px 149px 122px 18px 1084px 18px 54px 27px 53px 33px 13px 105px 22px 30px; }
.status > span { letter-spacing: 0; }
.status .pg { color: #333; padding-top: 1px; letter-spacing: .05px; }
.view { width: 40px; height: 22px; background: #d2d0ce; display: grid; place-content: center; }
.zoomline { width: 100px; height: 1px; background: #555; position: relative; }
.zoomline i { position: absolute; left: 48px; top: -5px; width: 5px; height: 11px; background: #333; }
.status .pct { letter-spacing: -.3px; }

/* taskbar */
.taskbar { height: 39px; background: linear-gradient(90deg, #21343c 0, #21363f 35%, #20303f 62%, #1c2f3e 75%, #1b2742 90%, #1b2842); display: grid; align-items: center; padding-left: 16px; color: #fff; flex: 1;
  grid-template-columns: 32px 346px 1156px 31px 67px 59px 22px 24px 24px 26px 76px 36px 2px; }
.find { width: 343px; height: 39px; margin-top: 1px; background: #f2f2f2; border: 1px solid #bbb; display: flex; align-items: center; color: #333; padding: 0 0 2px 11px; font-size: 15px; letter-spacing: -.35px; gap: 12px; }
.find svg:last-child { margin-left: auto; margin-right: 9px; }
.apps { height: 40px; display: grid; grid-template-columns: repeat(13, 49px); }
.apps div { display: grid; place-content: center; border: solid transparent; border-width: 2px 0; }
.apps .run { border-bottom-color: #76b9ed; margin: 0 4.500px; }
.apps .cx { background: #a5662f; border-bottom-color: #ff6a00; border-top: 0; margin-right: 1px; }
.logo { font: 700 12px "Open Sans", sans-serif; fill: #fff; letter-spacing: 0; }
.cxt { font: 12px "Open Sans", sans-serif; letter-spacing: -.5px; }
.cxn { font: 600 11.500px "Open Sans", sans-serif; fill: #fff; letter-spacing: -.5px; }
.fxp { font-size: 13.800px; letter-spacing: -.3px; }
.fxn { font-size: 14px; color: #f05a5a; letter-spacing: -.4px; }
.clock { width: 70px; margin: -1px 0 0 -3px; text-align: center; line-height: 18px; font-size: 11.500px; }
.note { padding-top: 7px; }
.peek { width: 1px; height: 40px; background: #697386; }
```
